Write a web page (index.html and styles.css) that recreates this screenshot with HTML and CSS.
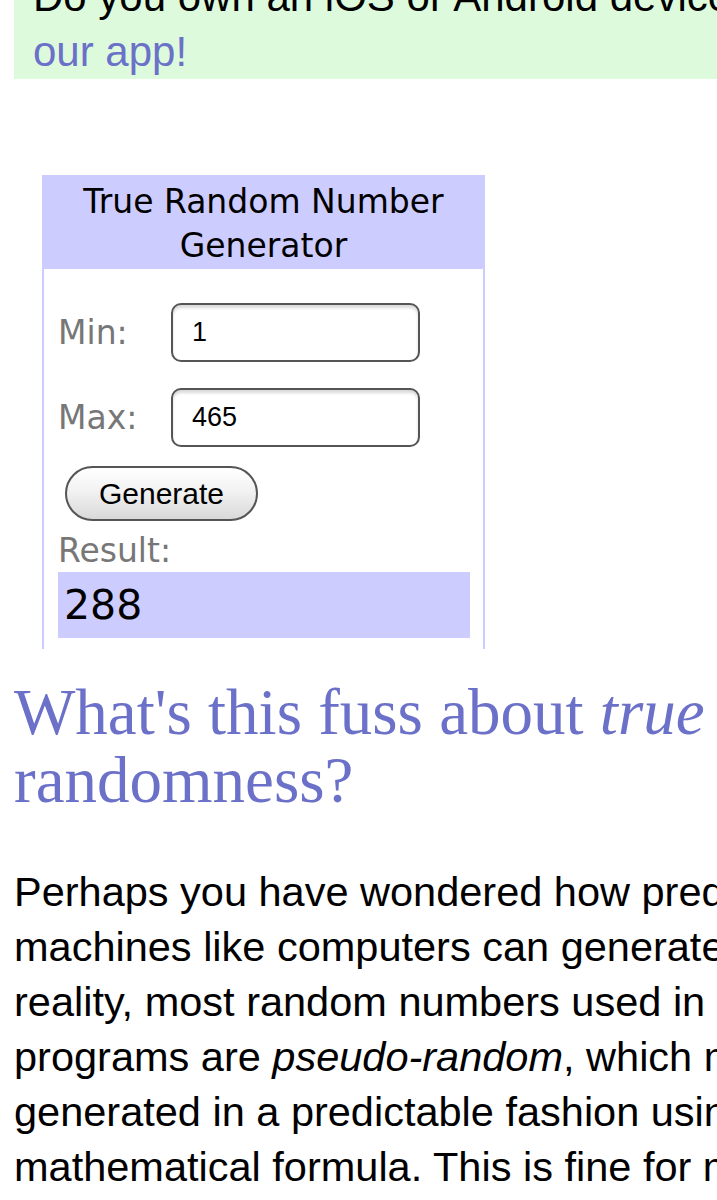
FILE: index.html
```html
<!DOCTYPE html>
<html lang="en">
<head>
    <meta charset="UTF-8">
    <meta name="viewport" content="width=device-width, initial-scale=1.0">
    <title>RANDOM.ORG - True Random Number Service</title>
    <link rel="stylesheet" href="styles.css">
</head>
<body>

    <div class="page">
        <div class="app-note">
            Do you own an iOS or Android device? Check out<br>
            <a href="#">our app!</a>
        </div>

        <div class="widget">
            <div class="widget-head">True Random Number Generator</div>
            <div class="widget-body">
                <div class="field">
                    <label for="min">Min:</label>
                    <input type="text" id="min" value="1">
                </div>
                <div class="field">
                    <label for="max">Max:</label>
                    <input type="text" id="max" value="465">
                </div>
                <button class="generate" onclick="generate()">Generate</button>
                <div class="result-label">Result:</div>
                <div class="result" id="result">288</div>
            </div>
        </div>

        <h2 class="fuss">What's this fuss about <em>true</em> randomness?</h2>

        <p class="intro">
            Perhaps you have wondered how predictable<br>
            machines like computers can generate randomness. In<br>
            reality, most random numbers used in computer<br>
            programs are <em>pseudo-random</em>, which means they are<br>
            generated in a predictable fashion using a<br>
            mathematical formula. This is fine for many
        </p>
    </div>

    <script>
        function generate() {
            var min = parseInt(document.getElementById("min").value, 10);
            var max = parseInt(document.getElementById("max").value, 10);

            if (isNaN(min) || isNaN(max) || min > max) {
                document.getElementById("result").textContent = "Error";
                return;
            }

            var n = min + Math.floor(Math.random() * (max - min + 1));
            document.getElementById("result").textContent = n;
        }
    </script>

</body>
</html>
```

FILE: styles.css
```css
body {
    margin: 0;
    overflow: hidden;
    background: #fff;
    font-family: "Liberation Sans", Arial, sans-serif;
    color: #000;
}

/* the page is wider than the phone screen, it runs off to the right */
.page {
    width: 1000px;
    margin-top: -41px;
    padding: 0 0 0 14px;
}

.app-note {
    background: #ddfbdc;
    font-size: 42px;
    line-height: 55px;
    padding: 10px 0 0 19px;
    white-space: nowrap;
}

.app-note a {
    color: #6b70c8;
    text-decoration: none;
}

.widget {
    width: 439px;
    margin: 96px 0 0 28px;
    border-left: 2px solid #ccccff;
    border-right: 2px solid #ccccff;
    font-family: "DejaVu Sans", Verdana, sans-serif;
}

.widget-head {
    background: #ccccff;
    text-align: center;
    font-size: 33px;
    line-height: 44px;
    padding: 5px 10px 1px;
}

.widget-body {
    padding: 34px 13px 11px 14px;
}

.field {
    display: flex;
    align-items: center;
    margin-bottom: 26px;
}

.field label {
    width: 113px;
    font-size: 33px;
    color: #777;
}

.field input {
    width: 249px;
    height: 59px;
    box-sizing: border-box;
    border: 2px solid #555;
    border-radius: 10px;
    padding: 0 19px;
    font-family: "Liberation Sans", Arial, sans-serif;
    font-size: 27px;
    color: #000;
    box-shadow: inset 0 3px 3px rgba(0, 0, 0, 0.15);
    outline: none;
}

.field + .field {
    margin-bottom: 19px;
}

.generate {
    display: block;
    width: 193px;
    height: 55px;
    margin: 0 0 9px 7px;
    border: 2px solid #555;
    border-radius: 28px;
    background: linear-gradient(#ffffff, #f2f2f2 45%, #d9d9d9);
    font-family: "Liberation Sans", Arial, sans-serif;
    font-size: 30px;
    color: #000;
    padding: 0;
}

.result-label {
    font-size: 33px;
    line-height: 42px;
    color: #777;
}

.result {
    width: 406px;
    height: 66px;
    padding-left: 6px;
    background: #ccccff;
    font-size: 41px;
    line-height: 66px;
}

.fuss {
    max-width: 710px;
    margin: 29px 0 0;
    font-family: "Liberation Serif", Georgia, serif;
    font-weight: normal;
    font-size: 65px;
    line-height: 68px;
    color: #6b70c8;
}

.intro {
    margin: 50px 0 0;
    font-size: 41.5px;
    line-height: 55px;
    white-space: nowrap;
}
```
